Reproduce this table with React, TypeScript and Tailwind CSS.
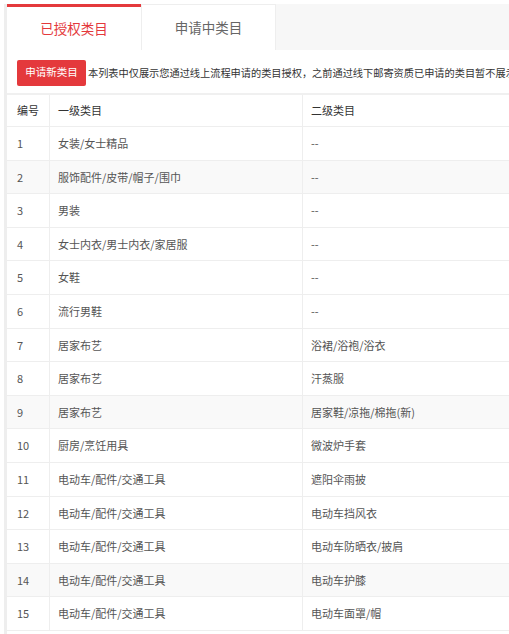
const rows: [string, string][] = [
  ['女装/女士精品', '--'],
  ['服饰配件/皮带/帽子/围巾', '--'],
  ['男装', '--'],
  ['女士内衣/男士内衣/家居服', '--'],
  ['女鞋', '--'],
  ['流行男鞋', '--'],
  ['居家布艺', '浴裙/浴袍/浴衣'],
  ['居家布艺', '汗蒸服'],
  ['居家布艺', '居家鞋/凉拖/棉拖(新)'],
  ['厨房/烹饪用具', '微波炉手套'],
  ['电动车/配件/交通工具', '遮阳伞雨披'],
  ['电动车/配件/交通工具', '电动车挡风衣'],
  ['电动车/配件/交通工具', '电动车防晒衣/披肩'],
  ['电动车/配件/交通工具', '电动车护膝'],
  ['电动车/配件/交通工具', '电动车面罩/帽'],
];

const grey = [2, 9, 14];

export default function App() {
  return (
    <div
      className="w-[509px] h-[634px] overflow-hidden bg-white pl-[4px] pt-[4px]"
      style={{ fontFamily: '"Noto Sans CJK SC", "Microsoft YaHei", sans-serif' }}
    >
      <div className="h-full border-l-[3px] border-[#eeeeee] flex flex-col">
        {/* tabs */}
        <div className="flex h-[46px] bg-[#f7f7f7] shrink-0">
          <div className="w-[134px] bg-white border-t-[3px] border-[#e4393c] flex items-center justify-center text-[13.5px] text-[#e4393c]">
            已授权类目
          </div>
          <div className="w-[135px] bg-white border-t border-l border-r border-[#eeeeee] flex items-center justify-center text-[13.5px] text-[#666]">
            申请中类目
          </div>
          <div className="flex-1" />
        </div>

        {/* toolbar */}
        <div className="h-[45px] shrink-0 flex items-center pl-[10px] border-b-2 border-[#f0f0f0] whitespace-nowrap overflow-hidden">
          <button className="h-[26px] w-[69px] rounded-[2px] bg-[#e4393c] text-white text-[10.5px] leading-none shrink-0 mt-[2px]">
            申请新类目
          </button>
          <span className="ml-[2px] text-[10.2px] text-[#333] mt-[2px]">
            本列表中仅展示您通过线上流程申请的类目授权，之前通过线下邮寄资质已申请的类目暂不展示
          </span>
        </div>

        {/* table */}
        <div className="flex-1 text-[11px]">
          <div className="flex h-[32px] border-b border-[#eeeeee] text-[#333]">
            <div className="w-[43px] border-r border-[#eeeeee] flex items-center pl-[10px]">编号</div>
            <div className="w-[253px] border-r border-[#eeeeee] flex items-center pl-[8px]">一级类目</div>
            <div className="flex-1 flex items-center pl-[8px]">二级类目</div>
          </div>
          {rows.map(([a, b], i) => (
            <div
              key={i}
              className={`flex h-[33.6px] border-b border-[#eeeeee] text-[#555] ${
                grey.includes(i + 1) ? 'bg-[#f9f9f9]' : 'bg-white'
              }`}
            >
              <div className="w-[43px] border-r border-[#eeeeee] flex items-center pl-[10px]">{i + 1}</div>
              <div className="w-[253px] border-r border-[#eeeeee] flex items-center pl-[8px]">{a}</div>
              <div className="flex-1 flex items-center pl-[8px]">{b}</div>
            </div>
          ))}
        </div>
      </div>
    </div>
  );
}
